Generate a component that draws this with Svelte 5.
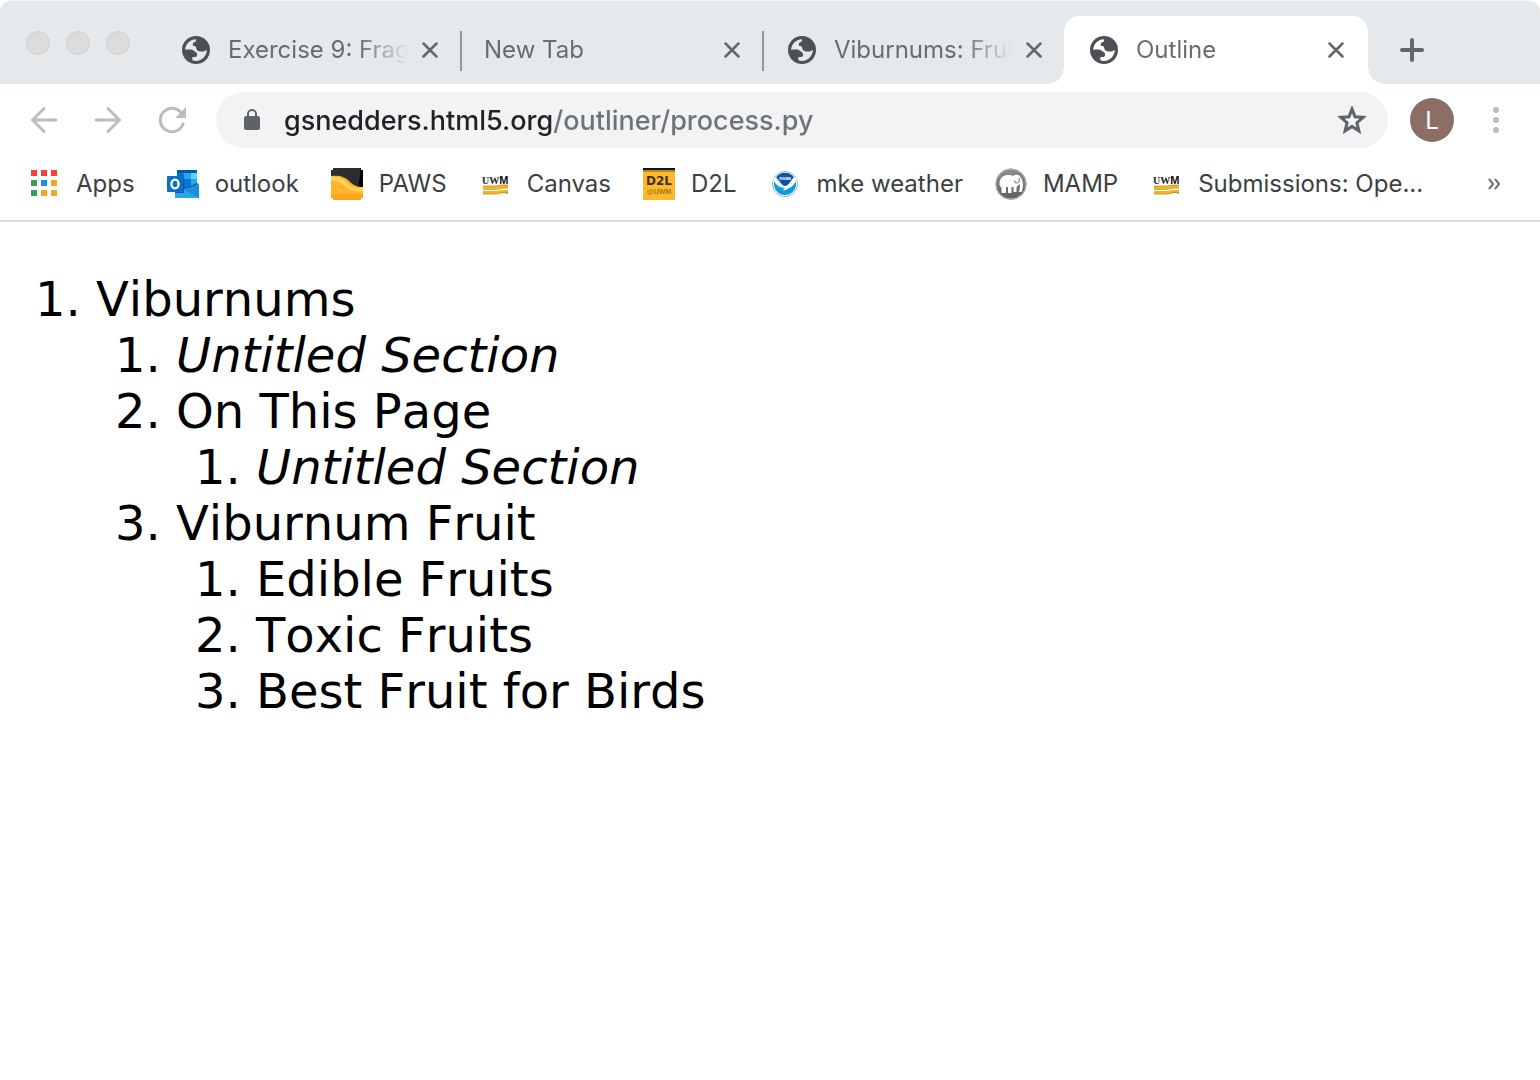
<script>
  const tabs = [
    { title: 'Exercise 9: Frag', icon: true, kind: 'first' },
    { title: 'New Tab', icon: false, kind: 'plain' },
    { title: 'Viburnums: Frui', icon: true, kind: 'last' },
    { title: 'Outline', icon: true, kind: 'active' }
  ];

  const bookmarks = [
    { label: 'Apps', icon: 'apps' },
    { label: 'outlook', icon: 'outlook' },
    { label: 'PAWS', icon: 'paws' },
    { label: 'Canvas', icon: 'uwm' },
    { label: 'D2L', icon: 'd2l' },
    { label: 'mke weather', icon: 'noaa' },
    { label: 'MAMP', icon: 'mamp' },
    { label: 'Submissions: Ope...', icon: 'uwm' }
  ];

  const outline = [
    {
      title: 'Viburnums',
      children: [
        { title: 'Untitled Section', untitled: true },
        { title: 'On This Page', children: [{ title: 'Untitled Section', untitled: true }] },
        {
          title: 'Viburnum Fruit',
          children: [{ title: 'Edible Fruits' }, { title: 'Toxic Fruits' }, { title: 'Best Fruit for Birds' }]
        }
      ]
    }
  ];

  let url = $state('gsnedders.html5.org/outliner/process.py');
</script>

{#snippet globe()}
  <svg class="globe" viewBox="0 0 28 28" aria-hidden="true">
    <circle cx="14" cy="14" r="14" fill="#4d5156" />
    <path fill="var(--tab-bg)" d="M3.200 13.700C3.400 8 8 3.600 13.600 3.300c.6.6.6 1.500 0 2.200-.6.700-1.900.7-2.500 1.500-.5.700-.2 1.700-.2 2.700.9.300 2.300.3 2.900 1 .7.800.3 2.200 1 3.100.8 1 2.100 1.600 3.500 1.600h3.300c1.100 0 1.900-1.300 3.200-1.400C24.600 20 20 24.900 14 24.900c-1.200 0-2.600-.2-3.600-.6v-3.300h2.800c1.300 0 1.900-.9 1.900-2.200 0-1.400-.4-2.400-1.600-2.900-1.200-.5-2.100-1.700-3.300-2.100-2-.4-4.500-.1-7-.1z" />
  </svg>
{/snippet}

{#snippet favicon(name)}
  <svg class="favicon" viewBox="0 0 32 32" aria-hidden="true">
    {#if name === 'apps'}
      <path fill="#f93f38" d="M3 2h6v6H3zM13 2h6v6h-6zM23 2h6v6h-6z" />
      <path fill="#34a05a" d="M3 12h6v6H3zM3 22h6v6H3z" />
      <path fill="#1a8cf5" d="M13 12h6v6h-6z" />
      <path fill="#f4a524" d="M23 12h6v6h-6zM13 22h6v6h-6zM23 22h6v6h-6z" />
    {:else if name === 'outlook'}
      <path fill="#0358a7" d="M10 2h20v14H10z" />
      <path fill="#0b78d4" d="M10 5h7v6h-7z" />
      <path fill="#28a8ea" d="M17 5h7v6h-7zM10 11h7v6h-7z" />
      <path fill="#50d9ff" d="M24 5h6v6h-6z" />
      <path fill="#0078d4" d="M17 11h7v9h-7z" />
      <path fill="#28a8ea" d="M24 11h6v5l-6 4z" />
      <path fill="#123b6d" d="M30 15l2 1-12 7-4-3v-2l4 2z" opacity=".8" />
      <path fill="#1490df" d="M32 16v14H8V20l10 1z" />
      <path fill="#28a8ea" d="M8 30V19l10 3 14 8z" />
      <path fill="#0a4a8c" d="M10 7h6v18H8v-1h8z" opacity=".5" />
      <path fill="#0a5ca8" d="M16 10h1v15H8v-1h8z" />
      <rect y="8" width="16" height="16" rx="1" fill="#0f6fc5" />
      <ellipse cx="8" cy="16" rx="3.600" ry="4.300" fill="none" stroke="#fff" stroke-width="2.300" />
    {:else if name === 'paws'}
      <path fill="#ffb52b" d="M2 0h28v2h2v28h-2v2H2v-2H0V2h2z" />
      <path fill="#ffa41f" d="M0 26h32v4h-2v2H2v-2H0z" />
      <path fill="#ffd45c" d="M0 9c10-1 13 3 18 8 4 3 9 4 14 2v4c-8 2-13-1-18-5C9 14 5 12 0 13z" />
      <path fill="#2d2d2d" d="M2 0h28v2h2v17c-6 0-10-2-14-6S9 7 0 8V2h2z" />
      <path fill="#000" d="M29 0h1v2h2v17l-5-1c2-6 2-12 2-18z" />
    {:else if name === 'uwm'}
      <text x="3" y="16" class="logo-serif">UW<tspan class="logo-black">M</tspan></text>
      <path fill="#f7b51c" d="M4 18h13l6-1h6v3h-5l-7 1H4zM4 23h13l6-1h6v3h-5l-7 1H4z" />
      <path fill="none" stroke="#b5851c" stroke-width=".7" d="M4 18h12l7-1h6M4 21.500h13l7-1.500h5M4 26h13l7-1.500h5" />
      <path fill="#aaa" d="M27 25h2v1h-2z" />
    {:else if name === 'd2l'}
      <path fill="#ffb82a" d="M0 0h32v32H0z" />
      <path fill="#b38b35" d="M0 2h32v2H0z" />
      <path fill="#111" d="M0 0h32v2H0z" />
      <text x="16" y="17" class="logo-d2l">D2L</text>
      <text x="16" y="26" class="logo-uwm">@UWM</text>
    {:else if name === 'noaa'}
      <circle cx="16" cy="16" r="12.500" fill="#fff" stroke="#8fb4da" stroke-width="1" />
      <circle cx="16" cy="16" r="11" fill="#0a9be0" />
      <path fill="#0b55a4" d="M7 9.500a11 11 0 0 1 18 0L16.500 20z" />
      <path fill="#fff" d="M4 11l3-2c3 4 6 9 9 9s6-5 9-9l3 2c-2 5-5 8-8 9-2 1-4 3-6 2l2-2c-6 0-10-4-12-9z" />
      <text x="16" y="12" class="logo-noaa">noaa</text>
    {:else if name === 'mamp'}
      <defs>
        <linearGradient id="mamp-disc" x1="0" y1="0" x2="0" y2="1">
          <stop offset="0" stop-color="#8f8f8f" />
          <stop offset="1" stop-color="#5e5e5e" />
        </linearGradient>
      </defs>
      <circle cx="16" cy="16" r="15.500" fill="url(#mamp-disc)" />
      <circle cx="16" cy="16" r="15" fill="none" stroke="#b8b8b8" stroke-width="1" />
      <path fill="#fff" d="M4.500 17c-.5-6 3-10 8-10 2.500 0 4 .4 5.500 1 4-2.500 7-1 8 2 2.500 3 2.500 9 .5 14h-2.500c1-3 1.300-6 .5-8l-3 3v5h-3v-5h-2v6h-3.500v-6h-2v6H6.500v-5z" />
      <path fill="none" stroke="#8a8a8a" stroke-width="1.200" d="M24 10c1 2 0 5-2 5-1.500 0-2.500-1-3-2.500" />
    {/if}
  </svg>
{/snippet}

{#snippet sections(items)}
  <ol>
    {#each items as item}
      <li>
        {#if item.untitled}<i>{item.title}</i>{:else}{item.title}{/if}
        {#if item.children}{@render sections(item.children)}{/if}
      </li>
    {/each}
  </ol>
{/snippet}

<div class="browser">
  <header class="tab-strip">
    <div class="window-controls">
      <button aria-label="Close window"></button>
      <button aria-label="Minimize window"></button>
      <button aria-label="Zoom window"></button>
    </div>
    <div class="tabs" role="tablist">
      {#each tabs as tab}
        <div class="tab {tab.kind}" role="tab" tabindex="0" aria-selected={tab.kind === 'active'}>
          {#if tab.icon}{@render globe()}{/if}
          <span class="title">{tab.title}</span>
          <button class="close" aria-label="Close tab">
            <svg viewBox="0 0 16 16"><path d="M1.500 1.500l13 13M14.500 1.500l-13 13" /></svg>
          </button>
        </div>
      {/each}
    </div>
    <button class="new-tab" aria-label="New tab">
      <svg viewBox="0 0 24 24"><path d="M12 2v20M2 12h20" /></svg>
    </button>
  </header>

  <nav class="toolbar" aria-label="Navigation">
    <button class="nav" aria-label="Back">
      <svg viewBox="0 0 28 28"><path d="M26 14H3M14 2.500L2.500 14 14 25.500" /></svg>
    </button>
    <button class="nav" aria-label="Forward">
      <svg viewBox="0 0 28 28"><path d="M2 14h23M14 2.500L25.500 14 14 25.500" /></svg>
    </button>
    <button class="nav" aria-label="Reload">
      <svg viewBox="0 0 28 28">
        <path d="M24.300 8.500A11.700 11.700 0 1 0 25 18" />
        <path class="head" d="M28 1v11H17z" />
      </svg>
    </button>
    <div class="omnibox">
      <svg class="lock" viewBox="0 0 16 22" aria-hidden="true">
        <rect y="7" width="16" height="14" rx="2" fill="#5f6368" />
        <path d="M4 8V5a4 4 0 0 1 8 0v3" fill="none" stroke="#5f6368" stroke-width="2" />
      </svg>
      <input type="text" aria-label="Address" bind:value={url} spellcheck="false" />
      <button class="star" aria-label="Bookmark this page">
        <svg viewBox="0 0 28 28"><path d="M14 3l3 7.800 8.300.6-6.400 5.300 2 8.200-6.900-4.500-6.900 4.500 2-8.200-6.400-5.300 8.300-.6z" /></svg>
      </button>
    </div>
    <button class="avatar" aria-label="Profile">L</button>
    <button class="menu" aria-label="Menu">
      <svg viewBox="0 0 6 26"><circle cx="3" cy="3" r="3" /><circle cx="3" cy="13" r="3" /><circle cx="3" cy="23" r="3" /></svg>
    </button>
  </nav>

  <nav class="bookmarks" aria-label="Bookmarks">
    {#each bookmarks as mark}
      <a href="#{mark.icon}">{@render favicon(mark.icon)}<span>{mark.label}</span></a>
    {/each}
    <button class="overflow" aria-label="More bookmarks">
      <svg viewBox="0 0 12 12"><path d="M1 1l4 5-4 5M7 1l4 5-4 5" /></svg>
    </button>
  </nav>

  <main>{@render sections(outline)}</main>
</div>

<style>
  :global(body) {
    margin: 0;
    background: #fff;
  }
  .browser {
    font-family: Inter, 'Liberation Sans', sans-serif;
    font-size: 24px;
    color: #3c4043;
  }
  button {
    border: 0;
    padding: 0;
    background: none;
    font: inherit;
    color: inherit;
    display: flex;
    align-items: center;
    justify-content: center;
    flex: none;
  }
  svg {
    display: block;
    flex: none;
  }

  .tab-strip {
    --tab-bg: #e5e9ec;
    display: flex;
    height: 84px;
    box-sizing: border-box;
    border-top: 1px solid #f3f5f6;
    border-radius: 12px 12px 0 0;
    background: var(--tab-bg);
  }
  .window-controls {
    display: flex;
    align-items: center;
    gap: 16px;
    flex: none;
    width: 132px;
    padding-left: 26px;
  }
  .window-controls button {
    width: 24px;
    height: 24px;
    box-sizing: border-box;
    border: 1px solid #cfcdcd;
    border-radius: 50%;
    background: #dddcdc;
  }
  .tabs {
    display: flex;
    align-items: flex-end;
    flex: 0 1 auto;
    min-width: 0;
  }
  .tab {
    position: relative;
    display: flex;
    align-items: center;
    flex: 0 1 auto;
    width: 304px;
    min-width: 0;
    height: 68px;
    box-sizing: border-box;
    padding: 0 20px 0 24px;
    color: #686c70;
  }
  .tab.plain {
    width: 302px;
    padding-left: 22px;
  }
  .tab.last {
    width: 300px;
    padding-right: 18px;
  }
  .first::after,
  .plain::after {
    content: '';
    position: absolute;
    right: 0;
    bottom: 13px;
    width: 2px;
    height: 40px;
    background: #93979b;
  }
  .tab.active {
    --tab-bg: #fff;
    padding-left: 26px;
    border-radius: 16px 16px 0 0;
    background: #fff;
  }
  /* Flared feet that join the selected tab to the toolbar */
  .active::before,
  .active::after {
    content: '';
    position: absolute;
    bottom: 0;
    width: 16px;
    height: 16px;
  }
  .active::before {
    right: 100%;
    background: radial-gradient(circle at 0 0, transparent 15px, #fff 16px);
  }
  .active::after {
    left: 100%;
    background: radial-gradient(circle at 100% 0, transparent 15px, #fff 16px);
  }
  .globe {
    width: 28px;
    height: 28px;
    margin-right: 18px;
  }
  .title {
    flex: 1;
    min-width: 0;
    overflow: hidden;
    white-space: nowrap;
    line-height: 32px;
    mask-image: linear-gradient(to right, #000 calc(100% - 52px), transparent calc(100% - 2px));
  }
  .close {
    width: 24px;
    height: 24px;
    margin-left: 8px;
  }
  .close svg {
    width: 16px;
    height: 16px;
  }
  .close path,
  .new-tab path {
    fill: none;
    stroke: #63676a;
    stroke-width: 3;
    stroke-linecap: round;
  }
  .close path {
    stroke-width: 2.5;
  }
  .new-tab path {
    stroke-width: 4;
  }
  .new-tab {
    width: 48px;
    height: 68px;
    margin: 15px 0 0 20px;
  }
  .new-tab svg {
    width: 24px;
    height: 24px;
  }

  .toolbar {
    display: flex;
    align-items: center;
    height: 72px;
    padding: 0 12px;
  }
  .nav {
    width: 64px;
    height: 56px;
  }
  .nav svg {
    width: 28px;
    height: 28px;
  }
  .nav path {
    fill: none;
    stroke: #babcbe;
    stroke-width: 3;
    stroke-linecap: round;
    stroke-linejoin: round;
  }
  .nav .head {
    fill: #babcbe;
    stroke: none;
  }
  .omnibox {
    display: flex;
    align-items: center;
    flex: 1;
    min-width: 0;
    height: 56px;
    box-sizing: border-box;
    margin-left: 12px;
    padding: 0 20px 0 28px;
    border-radius: 28px;
    background: #f1f3f4;
  }
  .lock {
    width: 16px;
    height: 22px;
  }
  input {
    flex: 1;
    min-width: 0;
    height: 40px;
    margin-left: 24px;
    padding: 0;
    border: 0;
    outline: 0;
    font-family: Inter, 'Liberation Sans', sans-serif;
    font-size: 27px;
    font-weight: 500;
    color: #202124;
    caret-color: #202124;
    /* The host is drawn darker than the path */
    background: linear-gradient(to right, #202124 270px, #6f7276 270px) text;
    -webkit-text-fill-color: transparent;
  }
  .star {
    width: 32px;
    height: 32px;
  }
  .star svg {
    width: 28px;
    height: 28px;
  }
  .star path {
    fill: none;
    stroke: #5f6368;
    stroke-width: 3;
  }
  .avatar {
    width: 44px;
    height: 44px;
    margin-left: 22px;
    border-radius: 50%;
    background: #8d6e64;
    color: #fff;
  }
  .menu {
    width: 40px;
    height: 44px;
    margin: 0 12px 0 22px;
  }
  .menu svg {
    width: 6px;
    height: 26px;
    fill: #babcbe;
  }

  .bookmarks {
    display: flex;
    align-items: center;
    height: 56px;
    padding: 0 32px 8px 28px;
    gap: 32px;
    border-bottom: 2px solid #dadce0;
  }
  .bookmarks a {
    display: flex;
    align-items: center;
    gap: 16px;
    color: #3c4043;
    text-decoration: none;
    white-space: nowrap;
    line-height: 32px;
  }
  .favicon {
    width: 32px;
    height: 32px;
  }
  .overflow {
    width: 28px;
    height: 32px;
    margin-left: auto;
  }
  .overflow svg {
    width: 12px;
    height: 12px;
  }
  .overflow path {
    fill: none;
    stroke: #5f6368;
    stroke-width: 2;
  }
  .logo-serif {
    font: bold 10px 'Liberation Serif', serif;
    fill: #222;
  }
  .logo-black {
    font: bold 11px 'Liberation Sans', sans-serif;
    fill: #111;
  }
  .logo-d2l {
    font: bold 12px 'DejaVu Sans', sans-serif;
    fill: #3f3013;
    text-anchor: middle;
  }
  .logo-uwm {
    font: bold 7px 'Liberation Sans', sans-serif;
    fill: #a57818;
    text-anchor: middle;
  }
  .logo-noaa {
    font: bold 5px 'Liberation Sans', sans-serif;
    fill: #fff;
    text-anchor: middle;
  }

  main {
    padding: 49px 16px;
    font-family: Verdana, 'DejaVu Sans', sans-serif;
    font-size: 48px;
    line-height: 56px;
    font-kerning: none;
    color: #000;
  }
  ol {
    margin: 0;
    padding-left: 80px;
  }
</style>
